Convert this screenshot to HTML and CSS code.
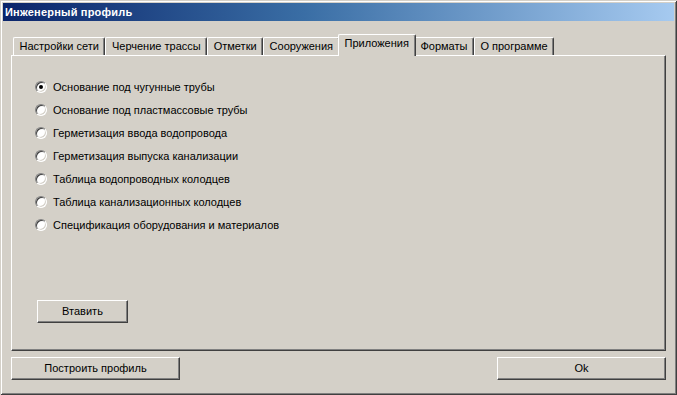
FILE: index.html
```html
<!DOCTYPE html>
<html lang="ru">
<head>
<meta charset="utf-8">
<title>Инженерный профиль</title>
<link rel="stylesheet" href="styles.css">
</head>
<body>
<div class="window">
  <div class="titlebar">Инженерный профиль</div>
  <div class="tabs">
    <div class="tab">Настройки сети</div>
    <div class="tab">Черчение трассы</div>
    <div class="tab">Отметки</div>
    <div class="tab">Сооружения</div>
    <div class="tab tab-active">Приложения</div>
    <div class="tab">Форматы</div>
    <div class="tab">О программе</div>
  </div>
  <div class="panel">
    <div class="options">
      <label class="option"><span class="radio radio-checked"></span><span class="option-text">Основание под чугунные трубы</span></label>
      <label class="option"><span class="radio"></span><span class="option-text">Основание под пластмассовые трубы</span></label>
      <label class="option"><span class="radio"></span><span class="option-text">Герметизация ввода водопровода</span></label>
      <label class="option"><span class="radio"></span><span class="option-text">Герметизация выпуска канализации</span></label>
      <label class="option"><span class="radio"></span><span class="option-text">Таблица водопроводных колодцев</span></label>
      <label class="option"><span class="radio"></span><span class="option-text">Таблица канализационных колодцев</span></label>
      <label class="option"><span class="radio"></span><span class="option-text">Спецификация оборудования и материалов</span></label>
    </div>
    <div class="button button-insert">Втавить</div>
  </div>
  <div class="footer">
    <div class="button button-wide">Построить профиль</div>
    <div class="button button-wide">Ok</div>
  </div>
</div>
</body>
</html>
```

FILE: styles.css
```css
* { box-sizing: border-box; }
html, body {
  margin: 0;
  padding: 0;
  background: #d4d0c8;
}
body {
  font-family: "Liberation Sans", Arial, sans-serif;
  font-size: 11px;
  color: #000;
}
.window {
  width: 677px;
  height: 395px;
  padding: 3px 3px 0 3px;
  background: #d4d0c8;
  box-shadow:
    inset 1px 1px 0 #d4d0c8,
    inset -1px -1px 0 #404040,
    inset 2px 2px 0 #ffffff,
    inset -2px -2px 0 #808080;
  display: flex;
  flex-direction: column;
}
.titlebar {
  height: 18px;
  line-height: 18px;
  padding-left: 2px;
  color: #fff;
  font-weight: bold;
  font-size: 11px;
  letter-spacing: 0.2px;
  background: linear-gradient(to right, #0a246a 0%, #3a6ea5 45%, #a6caf0 100%);
}
.tabs {
  display: flex;
  align-items: flex-end;
  height: 21px;
  margin-top: 13px;
  margin-left: 10px;
  position: relative;
  z-index: 1;
}
.tab {
  height: 18px;
  line-height: 16px;
  padding: 0 5.5px;
  border-top: 1px solid #fff;
  border-left: 1px solid #fff;
  border-right: 1px solid #404040;
  box-shadow: inset -1px 0 0 #808080;
  border-radius: 2px 2px 0 0;
  background: #d4d0c8;
  white-space: nowrap;
}
.tab-active {
  height: 22px;
  margin: 0 -2px -1px -2px;
  padding: 0 6px;
  line-height: 17px;
  position: relative;
  z-index: 2;
}
.panel {
  margin: 0 8px 0 8px;
  height: 296px;
  border-top: 1px solid #fff;
  border-left: 1px solid #fff;
  border-right: 1px solid #404040;
  border-bottom: 1px solid #404040;
  box-shadow: inset -1px -1px 0 #808080;
  padding: 19px 0 0 23px;
  display: flex;
  flex-direction: column;
}
.options {
  display: flex;
  flex-direction: column;
}
.option {
  display: flex;
  align-items: center;
  height: 23px;
}
.radio {
  width: 12px;
  height: 12px;
  border-radius: 50%;
  background: #fff;
  border: 1px solid;
  border-color: #808080 #ffffff #ffffff #808080;
  box-shadow: inset 1px 1px 0 #404040, inset -1px -1px 0 #d4d0c8;
  position: relative;
  flex: none;
  margin-right: 6px;
}
.radio-checked::after {
  content: "";
  position: absolute;
  left: 3px;
  top: 3px;
  width: 4px;
  height: 4px;
  border-radius: 50%;
  background: #000;
}
.button {
  height: 23px;
  line-height: 21px;
  text-align: center;
  background: #d4d0c8;
  border-top: 1px solid #fff;
  border-left: 1px solid #fff;
  border-right: 1px solid #404040;
  border-bottom: 1px solid #404040;
  box-shadow: inset -1px -1px 0 #808080;
  font-size: 11px;
}
.button-insert {
  width: 91px;
  margin-top: 64px;
  margin-left: 2px;
}
.footer {
  display: flex;
  justify-content: space-between;
  margin: 6px 8px 0 8px;
}
.button-wide {
  width: 169px;
}
```
